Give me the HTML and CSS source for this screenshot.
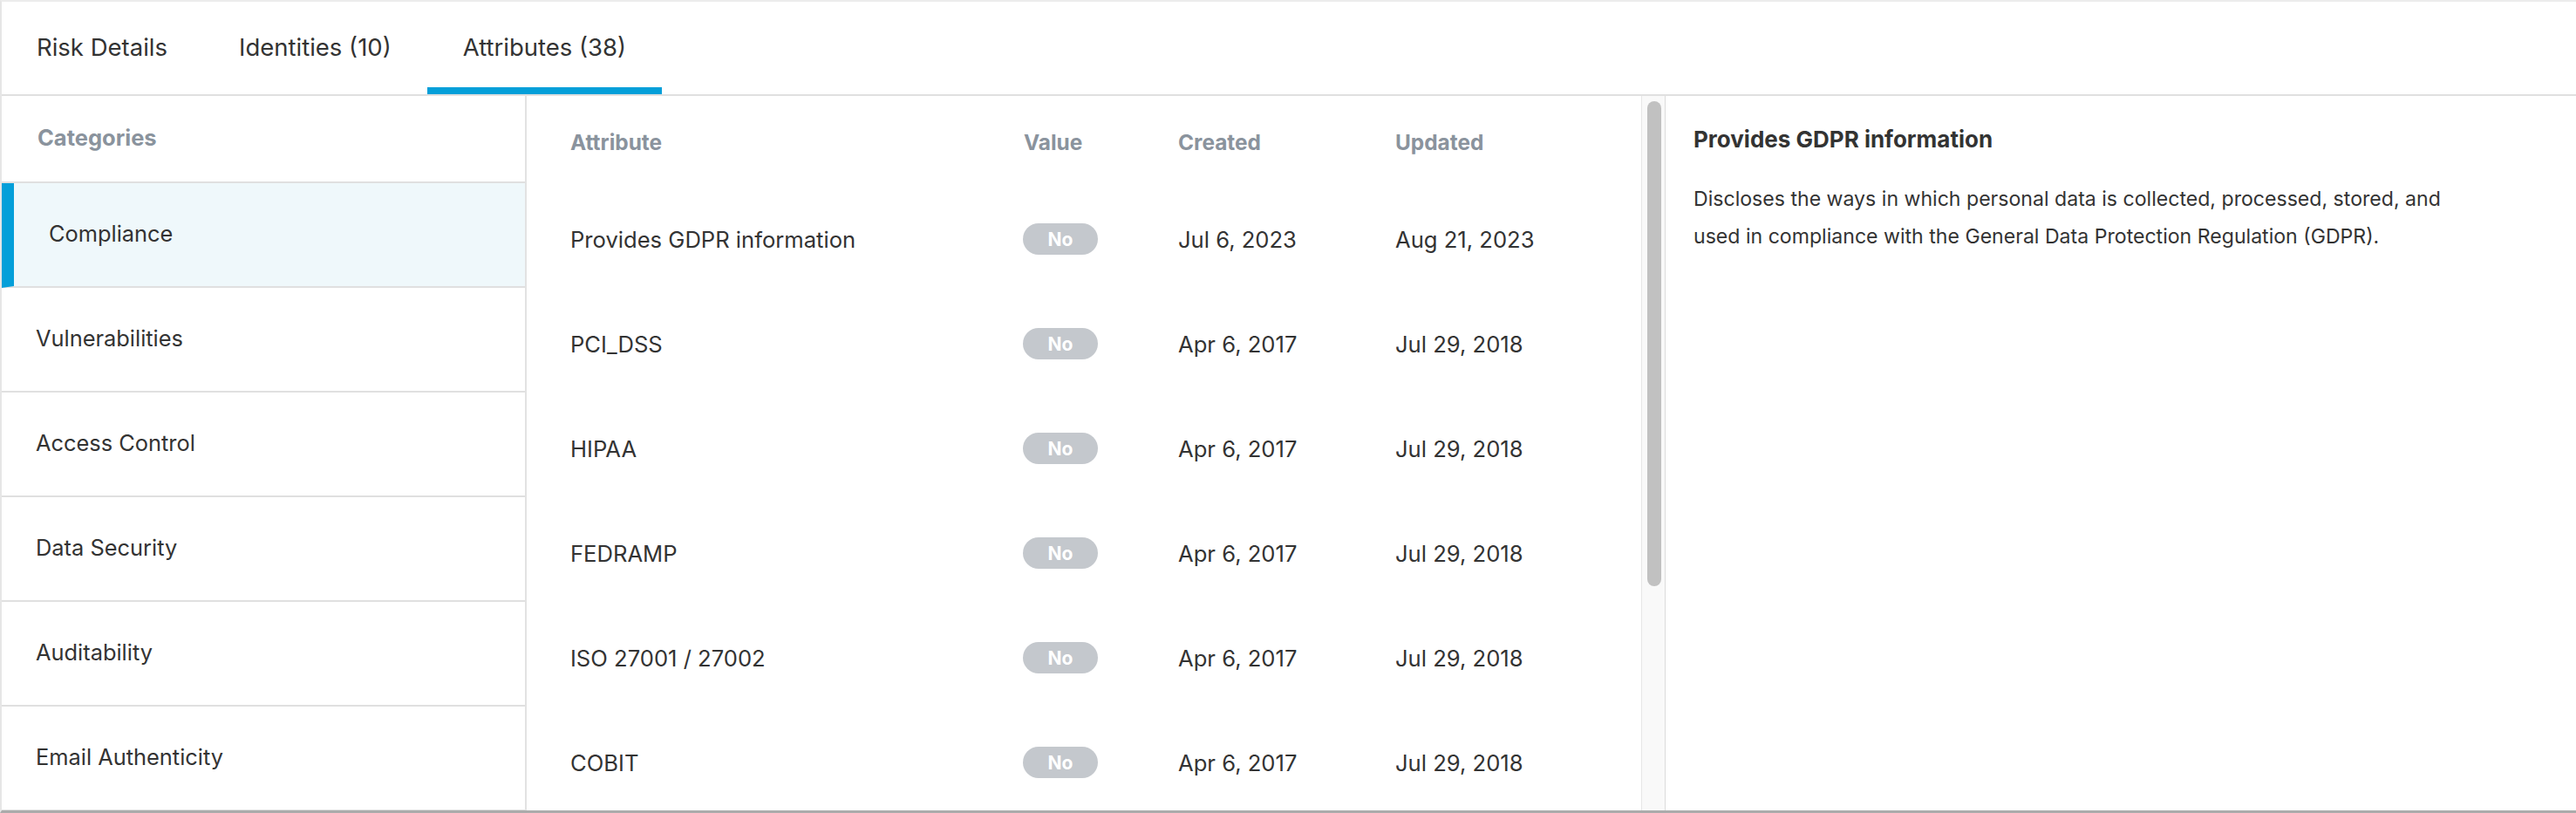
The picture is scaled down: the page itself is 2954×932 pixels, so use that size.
FILE: index.html
```html
<!DOCTYPE html>
<html lang="en">
<head>
<meta charset="utf-8">
<title>Attributes</title>
<link rel="stylesheet" href="styles.css">
</head>
<body>
<div class="panel">
  <nav class="tabs">
    <div class="tab">Risk Details</div>
    <div class="tab">Identities (10)</div>
    <div class="tab active">Attributes (38)</div>
  </nav>
  <div class="content">
    <aside class="sidebar">
      <div class="side-head">Categories</div>
      <ul class="cats">
        <li class="cat active">Compliance</li>
        <li class="cat">Vulnerabilities</li>
        <li class="cat">Access Control</li>
        <li class="cat">Data Security</li>
        <li class="cat">Auditability</li>
        <li class="cat">Email Authenticity</li>
      </ul>
    </aside>
    <section class="attrs">
      <div class="thead">
        <div>Attribute</div>
        <div>Value</div>
        <div>Created</div>
        <div>Updated</div>
      </div>
      <div class="trow">
        <div>Provides GDPR information</div>
        <div><span class="badge">No</span></div>
        <div>Jul 6, 2023</div>
        <div>Aug 21, 2023</div>
      </div>
      <div class="trow">
        <div>PCI_DSS</div>
        <div><span class="badge">No</span></div>
        <div>Apr 6, 2017</div>
        <div>Jul 29, 2018</div>
      </div>
      <div class="trow">
        <div>HIPAA</div>
        <div><span class="badge">No</span></div>
        <div>Apr 6, 2017</div>
        <div>Jul 29, 2018</div>
      </div>
      <div class="trow">
        <div>FEDRAMP</div>
        <div><span class="badge">No</span></div>
        <div>Apr 6, 2017</div>
        <div>Jul 29, 2018</div>
      </div>
      <div class="trow">
        <div>ISO 27001 / 27002</div>
        <div><span class="badge">No</span></div>
        <div>Apr 6, 2017</div>
        <div>Jul 29, 2018</div>
      </div>
      <div class="trow">
        <div>COBIT</div>
        <div><span class="badge">No</span></div>
        <div>Apr 6, 2017</div>
        <div>Jul 29, 2018</div>
      </div>
    </section>
    <div class="scrollbar"><div class="thumb"></div></div>
    <section class="detail">
      <h2 class="detail-title">Provides GDPR information</h2>
      <p class="detail-text">Discloses the ways in which personal data is collected, processed, stored, and used in compliance with the General Data Protection Regulation (GDPR).</p>
    </section>
  </div>
</div>
</body>
</html>
```
FILE: styles.css
```css
* { box-sizing: border-box; }
html, body { margin: 0; padding: 0; background: #ffffff; }
body {
  font-family: Inter, "Liberation Sans", Arial, sans-serif;
  color: #333333;
  width: 2954px;
  height: 932px;
  overflow: hidden;
}
.panel {
  width: 2954px;
  height: 932px;
  border-top: 2px solid #ececec;
  border-left: 2px solid #e6e6e6;
  border-bottom: 3px solid #ababab;
  display: flex;
  flex-direction: column;
  overflow: hidden;
}
.tabs {
  display: flex;
  height: 108px;
  flex: 0 0 108px;
  border-bottom: 2px solid #e0e0e0;
}
.tab {
  height: 106px;
  padding: 6px 41px 0 40px;
  border-bottom: 8px solid transparent;
  display: flex;
  align-items: center;
  font-size: 27.5px;
  color: #333333;
}
.tab + .tab { padding-left: 41px; }
.tab.active { border-bottom-color: #049fd9; }
.content {
  flex: 1;
  display: flex;
  min-height: 0;
  overflow: hidden;
}
.sidebar {
  flex: 0 0 602px;
  width: 602px;
  border-right: 2px solid #e2e2e2;
  overflow: hidden;
}
.side-head {
  height: 100px;
  padding-bottom: 3px;
  border-bottom: 2px solid #e0e0e0;
  padding-left: 41px;
  display: flex;
  align-items: center;
  font-size: 25.5px;
  font-weight: 700;
  color: #8a939d;
}
.cats { list-style: none; margin: 0; padding: 0; }
.cat {
  height: 120px;
  padding-bottom: 3px;
  border-bottom: 2px solid #e0e0e0;
  padding-left: 39px;
  display: flex;
  align-items: center;
  font-size: 25.4px;
  color: #333333;
}
.cat.active {
  background: #eff8fb;
  border-left: 14px solid #049fd9;
  padding-left: 40px;
}
.attrs {
  flex: 0 0 1278px;
  width: 1278px;
  overflow: hidden;
  padding-left: 50px;
}
.thead, .trow {
  display: grid;
  grid-template-columns: 520px 177px 249px 1fr;
  align-items: center;
}
.thead {
  height: 104px;
  padding-top: 2px;
  font-size: 24.4px;
  font-weight: 700;
  color: #8a939d;
}
.trow {
  height: 120px;
  font-size: 25.6px;
  color: #333333;
}
.badge {
  display: inline-flex;
  align-items: center;
  justify-content: center;
  width: 86px;
  height: 36px;
  border-radius: 18px;
  background: #c4c8cd;
  color: #ffffff;
  font-size: 21px;
  font-weight: 700;
  margin-left: -1px;
}
.scrollbar {
  flex: 0 0 28px;
  width: 28px;
  background: #f9f9f9;
  border-left: 1px solid #e6e6e6;
  border-right: 1px solid #dcdcdc;
  padding: 6px 5px 0 6px;
}
.thumb {
  width: 16px;
  height: 556px;
  border-radius: 8px;
  background: #c1c1c1;
}
.detail {
  flex: 1;
  padding: 28px 40px 0 32px;
}
.detail-title {
  margin: 0;
  font-size: 26px;
  line-height: 44px;
  font-weight: 700;
  color: #333333;
}
.detail-text {
  margin: 25px 0 0;
  font-size: 23.1px;
  line-height: 43px;
  color: #333333;
  max-width: 900px;
}
```
